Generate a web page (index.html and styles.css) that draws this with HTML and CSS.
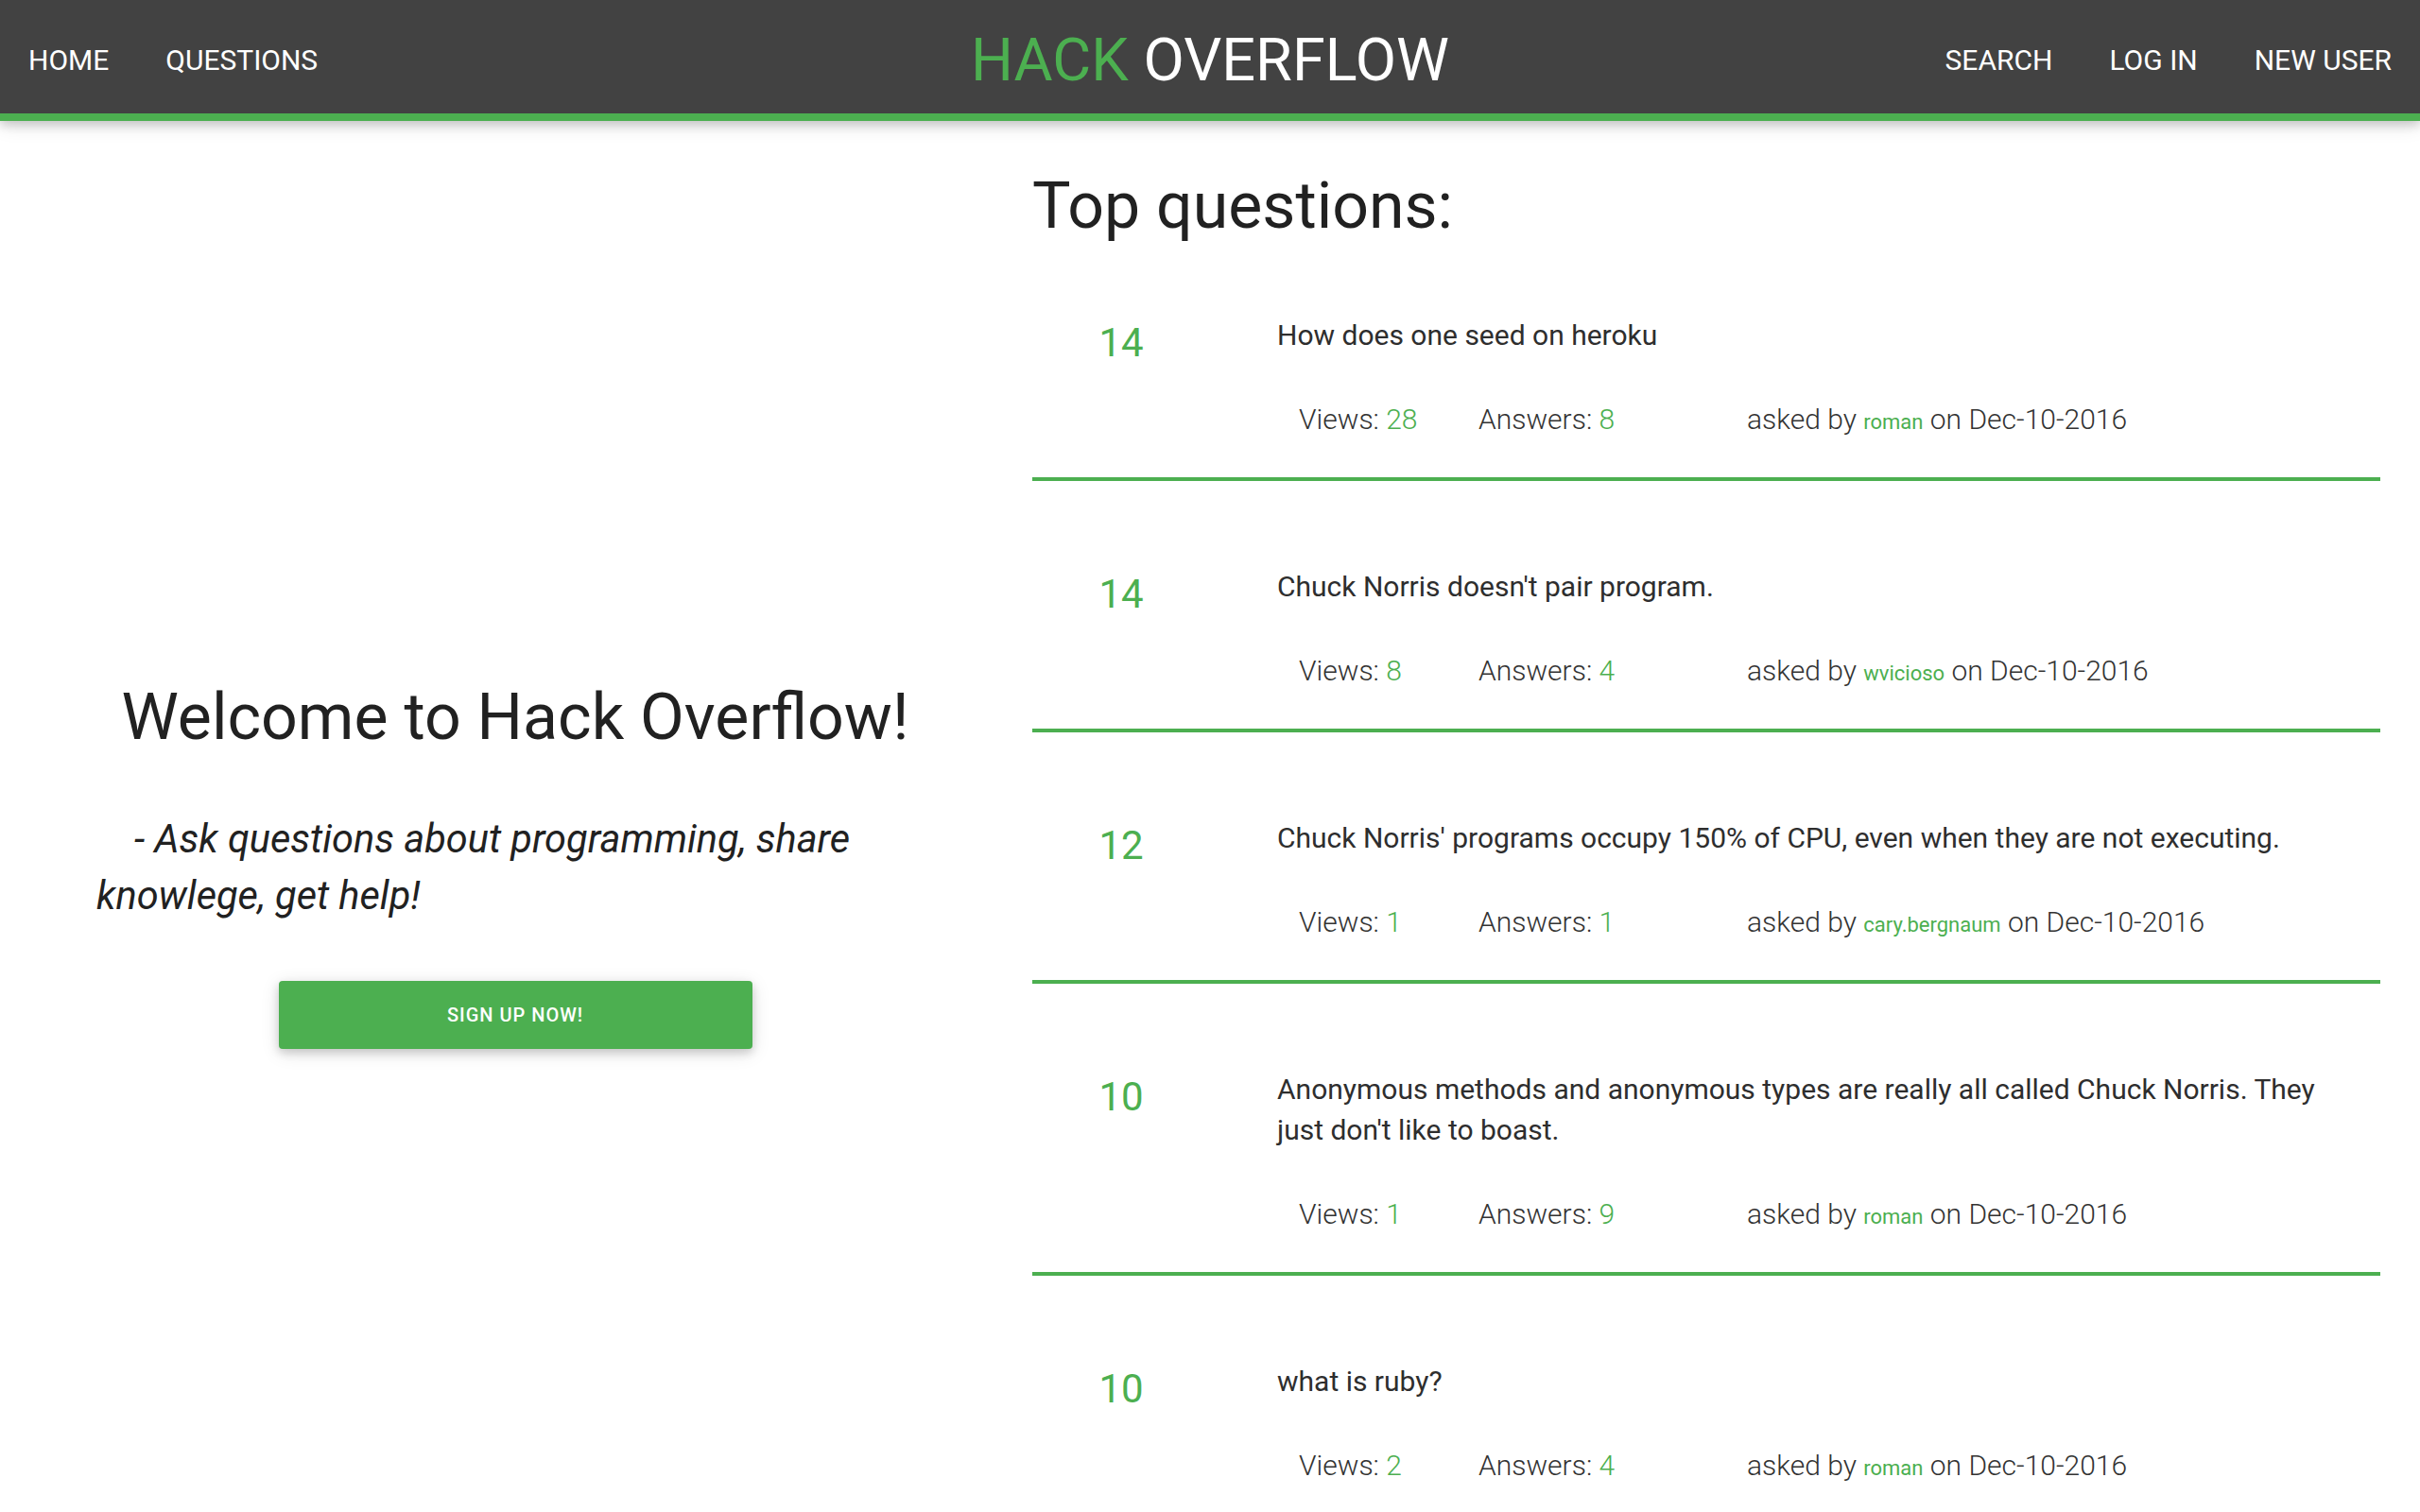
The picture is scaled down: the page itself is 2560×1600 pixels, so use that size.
FILE: index.html
```html
<!DOCTYPE html>
<html lang="en">
<head>
<meta charset="utf-8">
<title>Hack Overflow</title>
<link rel="stylesheet" href="styles.css">
</head>
<body>
<nav class="navbar">
  <ul class="nav-links nav-left">
    <li><a href="#">Home</a></li>
    <li><a href="#">Questions</a></li>
  </ul>
  <a class="brand" href="#"><span class="brand-accent">HACK</span> OVERFLOW</a>
  <ul class="nav-links nav-right">
    <li><a href="#">Search</a></li>
    <li><a href="#">Log in</a></li>
    <li><a href="#">New user</a></li>
  </ul>
</nav>

<main class="page">
  <section class="intro">
    <h2 class="intro-title">Welcome to Hack Overflow!</h2>
    <p class="intro-text">- Ask questions about programming, share knowlege, get help!</p>
    <a class="btn" href="#">Sign up now!</a>
  </section>

  <section class="questions">
    <h1 class="questions-title">Top questions:</h1>

    <article class="question">
      <div class="question-score">14</div>
      <div class="question-body">
        <div class="question-title">How does one seed on heroku</div>
        <div class="question-meta">
          <span>Views: <span class="num">28</span></span>
          <span>Answers: <span class="num">8</span></span>
          <span>asked by <a class="user" href="#">roman</a> on Dec-10-2016</span>
        </div>
      </div>
    </article>

    <article class="question">
      <div class="question-score">14</div>
      <div class="question-body">
        <div class="question-title">Chuck Norris doesn't pair program.</div>
        <div class="question-meta">
          <span>Views: <span class="num">8</span></span>
          <span>Answers: <span class="num">4</span></span>
          <span>asked by <a class="user" href="#">wvicioso</a> on Dec-10-2016</span>
        </div>
      </div>
    </article>

    <article class="question">
      <div class="question-score">12</div>
      <div class="question-body">
        <div class="question-title">Chuck Norris' programs occupy 150% of CPU, even when they are not executing.</div>
        <div class="question-meta">
          <span>Views: <span class="num">1</span></span>
          <span>Answers: <span class="num">1</span></span>
          <span>asked by <a class="user" href="#">cary.bergnaum</a> on Dec-10-2016</span>
        </div>
      </div>
    </article>

    <article class="question">
      <div class="question-score">10</div>
      <div class="question-body">
        <div class="question-title">Anonymous methods and anonymous types are really all called Chuck Norris. They just don't like to boast.</div>
        <div class="question-meta">
          <span>Views: <span class="num">1</span></span>
          <span>Answers: <span class="num">9</span></span>
          <span>asked by <a class="user" href="#">roman</a> on Dec-10-2016</span>
        </div>
      </div>
    </article>

    <article class="question">
      <div class="question-score">10</div>
      <div class="question-body">
        <div class="question-title">what is ruby?</div>
        <div class="question-meta">
          <span>Views: <span class="num">2</span></span>
          <span>Answers: <span class="num">4</span></span>
          <span>asked by <a class="user" href="#">roman</a> on Dec-10-2016</span>
        </div>
      </div>
    </article>
  </section>
</main>
</body>
</html>
```

FILE: styles.css
```css
* {
  box-sizing: border-box;
}

html, body {
  margin: 0;
  padding: 0;
  background: #ffffff;
}

body {
  font-family: Roboto, "Liberation Sans", sans-serif;
  color: rgba(0, 0, 0, 0.87);
}

a {
  text-decoration: none;
}

/* ---------- Navbar ---------- */
.navbar {
  position: relative;
  z-index: 2;
  height: 128px;
  padding-top: 7px;
  background: #424242;
  border-bottom: 8px solid #4caf50;
  display: grid;
  grid-template-columns: 1fr auto 1fr;
  align-items: center;
  box-shadow: 0 4px 10px 0 rgba(0, 0, 0, 0.16), 0 4px 20px 0 rgba(0, 0, 0, 0.12);
}

.nav-links {
  list-style: none;
  margin: 0;
  padding: 0;
  display: flex;
}

.nav-right {
  justify-self: end;
}

.nav-links a {
  display: block;
  padding: 0 30px;
  color: #ffffff;
  font-size: 30px;
  line-height: 60px;
  text-transform: uppercase;
}

.brand {
  color: #ffffff;
  font-size: 63px;
  line-height: 80px;
  white-space: nowrap;
}

.brand-accent {
  color: #4caf50;
}

/* ---------- Page layout ---------- */
.page {
  display: grid;
  grid-template-columns: 1092px 1fr;
  padding-right: 42px;
}

/* ---------- Intro ---------- */
.intro {
  padding: 594px 104px 0 102px;
}

.intro-title {
  margin: 0;
  font-size: 68px;
  line-height: 75px;
  font-weight: 400;
  text-align: center;
  color: #212121;
}

.intro-text {
  margin: 61px 0 0;
  font-size: 41.5px;
  line-height: 60px;
  font-weight: 400;
  font-style: italic;
  text-indent: 40px;
  color: #212121;
}

.btn {
  display: block;
  width: 501px;
  height: 72px;
  margin: 60px auto 0;
  background: #4caf50;
  color: #ffffff;
  border-radius: 4px;
  font-size: 20px;
  font-weight: 500;
  letter-spacing: 1px;
  line-height: 72px;
  text-align: center;
  text-transform: uppercase;
  box-shadow: 0 4px 10px 0 rgba(0, 0, 0, 0.16), 0 4px 20px 0 rgba(0, 0, 0, 0.12);
}

/* ---------- Questions ---------- */
.questions-title {
  margin: 53px 0 0;
  font-size: 68px;
  line-height: 75px;
  font-weight: 400;
  color: #212121;
}

.question {
  display: grid;
  grid-template-columns: 188px 1fr;
  padding: 90px 0 36px;
  border-bottom: 4px solid #4caf50;
}

.question:first-of-type {
  padding-top: 77px;
}

.question:last-of-type {
  padding-bottom: 0;
  border-bottom: none;
}

.question-score {
  text-align: center;
  color: #4caf50;
  font-size: 42px;
  line-height: 60px;
}

.question-body {
  padding: 0 30px 0 71px;
}

.question-title {
  font-size: 30px;
  line-height: 43px;
  color: #2e2e2e;
}

.question-meta {
  margin: 45px 0 0 23px;
  display: grid;
  grid-template-columns: 190px 284px auto;
  font-size: 30px;
  line-height: 45px;
  font-weight: 300;
  color: #333333;
  white-space: nowrap;
}

.num {
  color: #4caf50;
}

.user {
  color: #4caf50;
  font-size: 22px;
  font-weight: 400;
}
```
